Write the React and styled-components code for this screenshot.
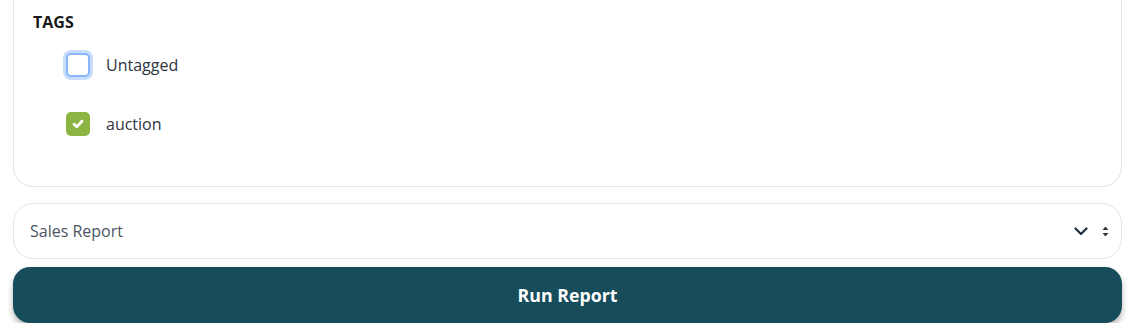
import React, { useState } from 'react'
import styled, { createGlobalStyle } from 'styled-components'

const Global = createGlobalStyle`
  body {
    margin: 0;
    background: #ffffff;
    font-family: "Open Sans", "Noto Sans", sans-serif;
    color: #1f2933;
  }
`

const Page = styled.div`
  display: flex;
  flex-direction: column;
  padding: 0 19px 0 13px;
`

const Card = styled.div`
  border: 1px solid #e5e5e5;
  border-top: none;
  border-radius: 0 0 20px 20px;
  padding: 12px 20px 50px 19px;
  display: flex;
  flex-direction: column;
`

const SectionTitle = styled.div`
  font-size: 16px;
  font-weight: 700;
  color: #1a1a1a;
  line-height: 20px;
`

const List = styled.div`
  display: flex;
  flex-direction: column;
  gap: 35px;
  padding: 21px 0 0 33px;
`

const Row = styled.label`
  display: flex;
  align-items: center;
  gap: 16px;
  font-size: 16px;
  color: #2d3440;
  cursor: pointer;
  height: 24px;
`

const Box = styled.span`
  width: 24px;
  height: 24px;
  box-sizing: border-box;
  border-radius: 5px;
  display: flex;
  align-items: center;
  justify-content: center;
  background: ${p => (p.$checked ? '#8bb443' : '#ffffff')};
  border: ${p => (p.$checked ? 'none' : '2px solid #88b6fb')};
  box-shadow: ${p => (p.$focus ? '0 0 0 3px #c8ddfd' : 'none')};
`

const Select = styled.div`
  margin-top: 16px;
  height: 56px;
  box-sizing: border-box;
  border: 1px solid #e5e5e5;
  border-radius: 20px;
  display: flex;
  align-items: center;
  padding: 0 12px 0 16px;
  font-size: 16px;
  color: #4a5463;
`

const SelectText = styled.span`
  flex: 1;
`

const Icons = styled.span`
  display: flex;
  align-items: center;
  gap: 14px;
`

const RunButton = styled.button`
  margin-top: 8px;
  height: 56px;
  border: none;
  border-radius: 17px;
  background: #174c5a;
  color: #ffffff;
  font-family: "Open Sans", "Noto Sans", sans-serif;
  font-size: 17.8px;
  font-weight: 700;
  box-shadow: 0 4px 6px rgba(0, 0, 0, 0.3);
  cursor: pointer;
`

function Check() {
  return (
    <svg width="12" height="10" viewBox="0 0 12 10">
      <path d="M2 5.2 L4.8 7.8 L10 2.2" fill="none" stroke="#fff" strokeWidth="2.8" strokeLinecap="round" strokeLinejoin="round" />
    </svg>
  )
}

export default function App() {
  const [tags, setTags] = useState({ Untagged: false, auction: true })
  const toggle = k => setTags(t => ({ ...t, [k]: !t[k] }))
  return (
    <>
      <Global />
      <Page>
        <Card>
          <SectionTitle>TAGS</SectionTitle>
          <List>
            {Object.keys(tags).map((k, i) => (
              <Row key={k} onClick={() => toggle(k)}>
                <Box $checked={tags[k]} $focus={i === 0}>{tags[k] && <Check />}</Box>
                {k}
              </Row>
            ))}
          </List>
        </Card>
        <Select>
          <SelectText>Sales Report</SelectText>
          <Icons>
            <svg width="14" height="9" viewBox="0 0 14 9">
              <path d="M1.5 1.5 L7 7 L12.5 1.5" fill="none" stroke="#1f2d3d" strokeWidth="2.2" strokeLinecap="round" strokeLinejoin="round" />
            </svg>
            <svg width="7" height="11" viewBox="0 0 7 11">
              <path d="M3.5 0.5 L6.5 4 H0.5 Z M3.5 10.5 L6.5 7 H0.5 Z" fill="#333" />
            </svg>
          </Icons>
        </Select>
        <RunButton>Run Report</RunButton>
      </Page>
    </>
  )
}
